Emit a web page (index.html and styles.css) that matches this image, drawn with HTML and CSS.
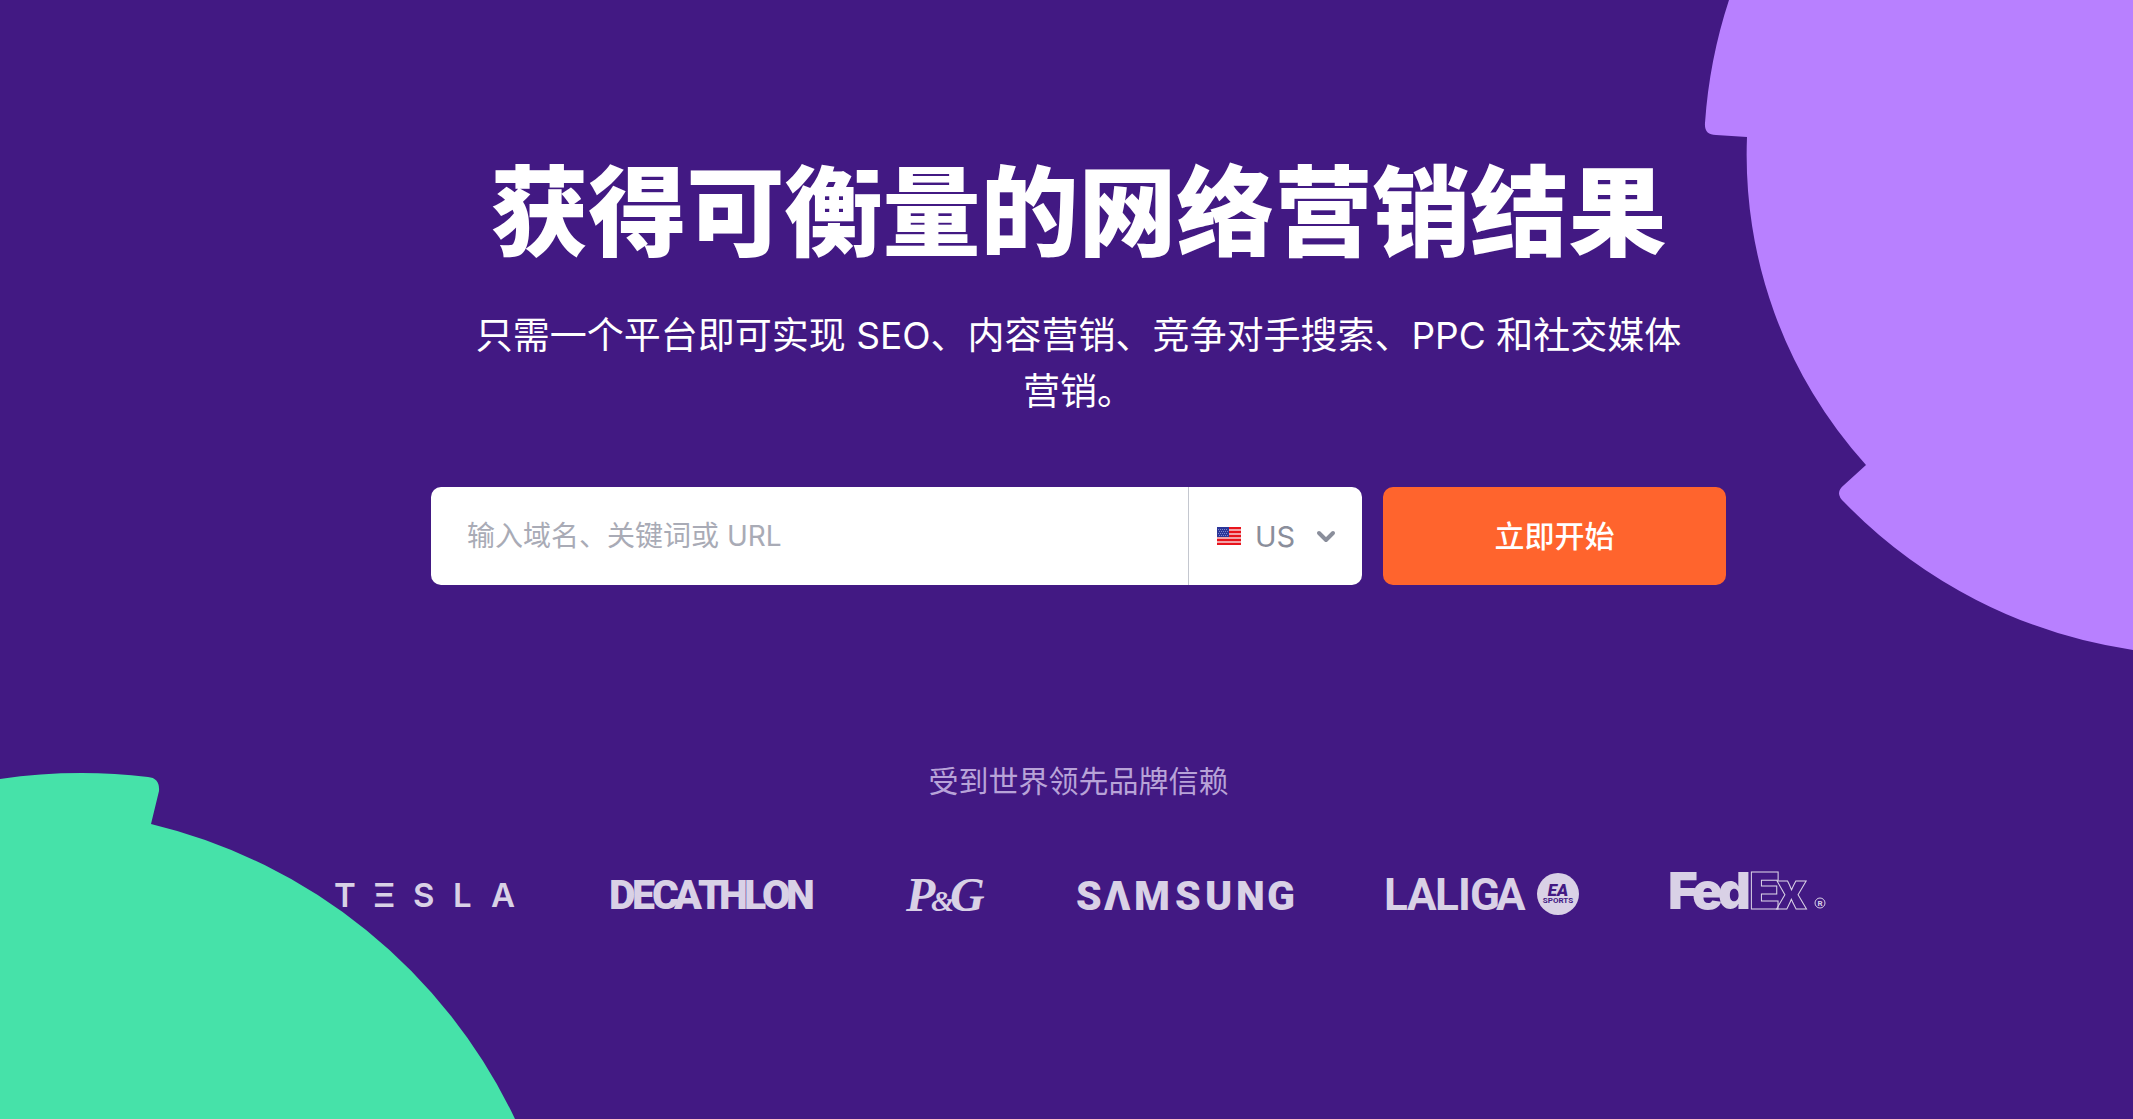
FILE: index.html
```html
<!DOCTYPE html>
<html lang="zh-CN">
<head>
<meta charset="utf-8">
<meta name="viewport" content="width=device-width, initial-scale=1">
<title>获得可衡量的网络营销结果</title>
<link rel="stylesheet" href="styles.css">
</head>
<body>
<main class="hero">
  <svg class="shape shape-violet" width="429" height="651" viewBox="0 0 429 651" aria-hidden="true">
    <path d="M25 0A504 504 0 0 0 1 123Q0 135 12 135L43 137A462 462 0 0 0 162 465L140 485Q130 493 140 502A504 504 0 0 0 429 650V0Z"/>
  </svg>
  <svg class="shape shape-green" width="516" height="347" viewBox="0 0 516 347" aria-hidden="true">
    <path d="M0 7A560 560 0 0 1 148 5Q160 6 159 19L151 52A544 544 0 0 1 515 347H0Z"/>
  </svg>

  <h1 class="title">获得可衡量的网络营销结果</h1>
  <p class="lead">只需一个平台即可实现 SEO、内容营销、竞争对手搜索、PPC 和社交媒体营销。</p>

  <form class="search">
    <div class="field">
      <input class="query" type="text" placeholder="输入域名、关键词或 URL" aria-label="输入域名、关键词或 URL">
      <div class="country">
        <svg class="flag" width="24" height="18" viewBox="0 0 24 18" aria-hidden="true">
          <path fill="#f2a3a8" d="M0 0h24v18H0z"/>
          <path stroke="#e8141c" stroke-width="2" d="M0 1h24M0 5h24M0 9h24M0 13h24M0 17h24"/>
          <path fill="#2b3699" d="M0 0h12v10H0z"/>
          <path stroke="#7d86cc" stroke-dasharray="1 1" d="M1 2.5h10M2 4.5h9M1 6.500h10M2 8.500h9"/>
        </svg>
        <select class="country-select" aria-label="国家">
          <option>US</option>
        </select>
        <svg class="chevron" width="20" height="14" viewBox="0 0 20 14" aria-hidden="true">
          <path d="M3 4l7 7 7-7"/>
        </svg>
      </div>
    </div>
    <button class="start" type="submit">立即开始</button>
  </form>

  <p class="trust">受到世界领先品牌信赖</p>
  <div class="brands">
    <svg class="brand" width="187" height="48" viewBox="0 0 187 48" role="img" aria-label="Tesla">
      <text class="tesla" y="36" x="2 41 81 121 159">TΞSLA</text>
    </svg>
    <svg class="brand" width="202" height="48" viewBox="0 0 202 48" role="img" aria-label="Decathlon">
      <text class="decathlon" y="38" x="-2 21 41 63 87 108 133 151 175">DECATHLON</text>
    </svg>
    <svg class="brand" width="80" height="48" viewBox="0 0 80 48" role="img" aria-label="P&amp;G">
      <text class="pg" y="40" x="1">P<tspan class="pg-and" x="26">&amp;</tspan><tspan x="45">G</tspan></text>
    </svg>
    <svg class="brand" width="217" height="48" viewBox="0 0 217 48" role="img" aria-label="Samsung">
      <text class="samsung" y="39" x="-1 27 57 98 128 159 190">SΛMSUNG</text>
    </svg>
    <svg class="brand" width="193" height="48" viewBox="0 0 193 48" role="img" aria-label="LaLiga EA Sports">
      <text class="laliga" y="39" x="-2 21 49 72 84 110">LALIGA</text>
      <circle cx="172" cy="23" r="21"/>
      <text class="ea" x="172" y="25">EA</text>
      <text class="ea-sports" x="172" y="32">SPORTS</text>
    </svg>
    <svg class="brand" width="155" height="48" viewBox="0 0 155 48" role="img" aria-label="FedEx">
      <text class="fedex" y="38" x="-3 21 47">Fed</text>
      <text class="fedex fedex-outline" y="38" x="78 105">Ex</text>
      <circle class="ring" cx="149" cy="32" r="5"/>
      <text class="reg" x="149" y="35">R</text>
    </svg>
  </div>
</main>
</body>
</html>
```
FILE: styles.css
```css
* {
  box-sizing: border-box;
}

body {
  margin: 0;
  background: #421983;
  font-family: Inter, "Noto Sans CJK SC", sans-serif;
  color: #fff;
}

.hero {
  position: relative;
  min-height: 100vh;
  padding: 143px 0 120px 24px;
  display: flex;
  flex-direction: column;
  align-items: center;
  overflow: hidden;
}

.shape {
  position: absolute;
}

.shape-violet {
  top: 0;
  right: 0;
  fill: #b880ff;
}

.shape-green {
  bottom: 0;
  left: 0;
  fill: #46e2a9;
}

.title,
.lead,
.search,
.trust,
.brands {
  position: relative;
  margin: 0;
}

.title {
  font-size: 98px;
  line-height: 140px;
  font-weight: 900;
  text-align: center;
}

.lead {
  max-width: 1224px;
  margin-top: 25px;
  font-size: 37px;
  line-height: 56px;
  text-align: center;
}

.search {
  display: flex;
  gap: 21px;
  width: 100%;
  max-width: 1295px;
  margin-top: 67px;
}

.field {
  flex: 1;
  display: flex;
  height: 98px;
  background: #fff;
  border-radius: 10px;
  overflow: hidden;
}

.query {
  flex: 1;
  min-width: 0;
  padding: 0 36px;
  border: 0;
  background: none;
  font: inherit;
  font-size: 28px;
  color: #191b23;
}

.query::placeholder {
  color: #a9abb6;
  opacity: 1;
}

.country {
  display: flex;
  align-items: center;
  width: 174px;
  padding: 0 26px 0 28px;
  border-left: 1px solid #c4c7cf;
}

.country-select {
  flex: 1;
  min-width: 0;
  margin-left: 14px;
  padding: 0;
  border: 0;
  background: none;
  appearance: none;
  font: inherit;
  font-size: 29px;
  color: #8a8e9b;
}

.chevron {
  fill: none;
  stroke: #8a8e9b;
  stroke-width: 4px;
  stroke-linecap: round;
  stroke-linejoin: round;
  pointer-events: none;
}

.start {
  width: 343px;
  height: 98px;
  padding: 0 0 4px;
  border: 0;
  border-radius: 10px;
  background: #ff642d;
  font: inherit;
  font-size: 30px;
  font-weight: 500;
  color: #fff;
}

.trust {
  margin-top: 174px;
  font-size: 30px;
  line-height: 44px;
  color: #b8a3d8;
}

.brands {
  display: flex;
  flex-wrap: wrap;
  justify-content: center;
  gap: 24px 92px;
  margin-top: 68px;
}

.brand {
  fill: #d9d1e6;
  overflow: visible;
}

.tesla {
  font: 600 33px Inter, sans-serif;
}

.decathlon {
  font: 900 41px Roboto, sans-serif;
}

.pg {
  font: italic 700 48px "Liberation Serif", serif;
}

.pg-and {
  font-size: 30px;
}

.samsung {
  font: 900 41px Roboto, sans-serif;
}

.laliga {
  font: 700 44px Roboto, sans-serif;
}

.ea,
.ea-sports {
  fill: #421983;
  text-anchor: middle;
  font: italic 900 17px Roboto, sans-serif;
}

.ea-sports {
  font: 700 8px Roboto, sans-serif;
}

.fedex {
  font: 900 51px Inter, sans-serif;
}

.fedex-outline,
.ring {
  fill: none;
  stroke: #d9d1e6;
  stroke-width: 1px;
}

.reg {
  text-anchor: middle;
  font: 700 8px Roboto, sans-serif;
}
```
